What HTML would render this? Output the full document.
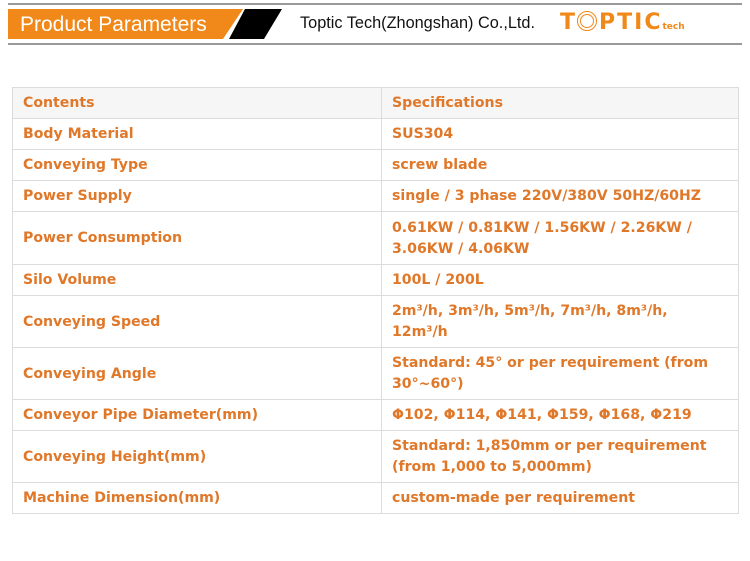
<!DOCTYPE html><html><head><meta charset="utf-8"><style>
body{margin:0;width:750px;height:561px;background:#fff;position:relative;overflow:hidden;font-family:"DejaVu Sans",Verdana,sans-serif}
.hl{position:absolute;left:8px;width:734px;height:2px;background:#9a9a9a}
table{position:absolute;left:12px;top:87px;width:727px;border-collapse:collapse}
td{border:1px solid #dcdcdc;color:#e0782a;font-weight:bold;font-size:14.1px;line-height:21px;padding:1px 0 0 10px;white-space:nowrap}
td:first-child{width:358px}
tr.h td{background:#f6f6f6}
</style></head><body>
<div class="hl" style="top:3px"></div>
<div class="hl" style="top:43px"></div>
<svg style="position:absolute;left:0;top:0" width="300" height="44">
<polygon points="8,9 243,9 223,39 8,39" fill="#f0891a"/>
<polygon points="245,9 282,9 264,39 229,39" fill="#000"/>
</svg>
<div style="position:absolute;left:20px;top:11px;color:#fff;font-family:'Liberation Sans',sans-serif;font-size:21px;line-height:28px">Product Parameters</div>
<div style="position:absolute;left:300px;top:12px;color:#111;font-family:'Liberation Sans',sans-serif;font-size:16.3px;line-height:22px">Toptic Tech(Zhongshan) Co.,Ltd.</div>
<div style="position:absolute;left:560px;top:9px;color:#f0891a;font-family:'DejaVu Sans',sans-serif;font-weight:bold;font-size:22px;line-height:28px;letter-spacing:2px">T<span style="display:inline-block;width:20px;height:20px;border-radius:50%;border:4px double #f0891a;box-sizing:border-box;vertical-align:-2px;margin-right:2px"></span>PTIC<span style="font-size:9px;letter-spacing:0">tech</span></div>
<table>
<tr class="h" style="height:31px"><td>Contents</td><td>Specifications</td></tr>
<tr style="height:31px"><td>Body Material</td><td>SUS304</td></tr>
<tr style="height:31px"><td>Conveying Type</td><td>screw blade</td></tr>
<tr style="height:31px"><td>Power Supply</td><td>single / 3 phase 220V/380V 50HZ/60HZ</td></tr>
<tr style="height:53px"><td>Power Consumption</td><td>0.61KW / 0.81KW / 1.56KW / 2.26KW /<br>3.06KW / 4.06KW</td></tr>
<tr style="height:31px"><td>Silo Volume</td><td>100L / 200L</td></tr>
<tr style="height:52px"><td>Conveying Speed</td><td>2m³/h, 3m³/h, 5m³/h, 7m³/h, 8m³/h,<br>12m³/h</td></tr>
<tr style="height:52px"><td>Conveying Angle</td><td>Standard: 45° or per requirement (from<br>30°~60°)</td></tr>
<tr style="height:31px"><td>Conveyor Pipe Diameter(mm)</td><td>Φ102, Φ114, Φ141, Φ159, Φ168, Φ219</td></tr>
<tr style="height:52px"><td>Conveying Height(mm)</td><td>Standard: 1,850mm or per requirement<br>(from 1,000 to 5,000mm)</td></tr>
<tr style="height:31px"><td>Machine Dimension(mm)</td><td>custom-made per requirement</td></tr>
</table>
</body></html>
